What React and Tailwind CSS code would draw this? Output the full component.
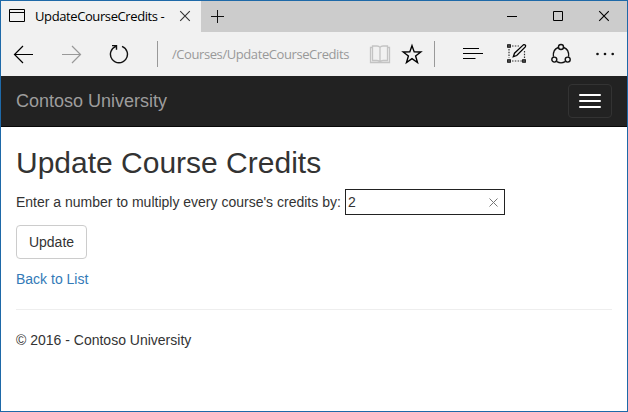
function TabBar() {
  return (
    <div className="flex h-[31px] bg-[#cccccc]">
      <div className="flex w-[200px] items-center bg-[#f1f1f1] pl-2">
        <svg className="h-[31px] w-4 shrink-0" viewBox="0 0 16 31" fill="none" stroke="#000">
          <path d="M.5 8.5h15v12H.5zM1 11.5h14" />
        </svg>
        <span className="mb-0.5 ml-2.5 w-[134px] whitespace-nowrap font-['Open_Sans',sans-serif] text-[13px] tracking-[-0.4px] text-black">
          UpdateCourseCredits -
        </span>
        <svg className="ml-2.5 h-[31px] w-3 shrink-0" viewBox="0 0 12 31" fill="none" stroke="#333" strokeWidth="1.1">
          <path d="m1.2 10.2 9.6 9.6m0-9.6-9.6 9.6" />
        </svg>
      </div>
      <svg className="ml-2.5 h-[31px] w-[13px]" viewBox="0 0 13 31" stroke="#111">
        <path d="M0 15.5h13M6.5 9v13" />
      </svg>
      <svg className="ml-auto mr-[18px] h-[31px] w-[102px]" viewBox="0 0 102 31" fill="none" stroke="#000">
        <path d="M0 15.5h10M46.5 10.5h9v9h-9z" />
        <path d="m92.2 10.2 9.6 9.6m0-9.6-9.6 9.6" strokeWidth="1.1" />
      </svg>
    </div>
  );
}

function Toolbar() {
  return (
    <div className="flex h-11 items-center bg-[#f1f1f1] pl-3">
      <svg className="h-6 w-5 shrink-0" viewBox="0 0 20 24" fill="none" stroke="#000" strokeWidth="1.2">
        <path d="M1.5 12.5H20M10 4l-8.5 8.5L10 21" />
      </svg>
      <svg className="ml-[29px] h-6 w-5 shrink-0" viewBox="0 0 20 24" fill="none" stroke="#999" strokeWidth="1.2">
        <path d="M0 12.5h18.5M10 4l8.5 8.5L10 21" />
      </svg>
      <svg className="ml-[27px] h-6 w-5 shrink-0" viewBox="0 0 20 24" fill="none" stroke="#111" strokeWidth="1.4">
        <path d="M13 4.3A8.500 8.500 0 1 1 6.900 4.300M3 3.600h4.500v4.200" />
      </svg>
      <div className="ml-7 h-[26px] w-px shrink-0 bg-[#999999]" />
      <span className="ml-3.5 w-[190px] shrink-0 whitespace-nowrap font-['Open_Sans',sans-serif] text-[13px] tracking-[-0.42px] text-[#999999]">
        /Courses/UpdateCourseCredits
      </span>
      <svg className="ml-[7px] h-6 w-[22px] shrink-0" viewBox="0 0 22 24" fill="none" stroke="#c3c3c3" strokeWidth="1.3">
        <path d="M11 5.300Q10 4 8 4H3.500v14.500H8q2 0 3 1.500 1-1.500 3-1.500h4.500V4H14q-2 0-3 1.300zM11 5.300v15M3.500 5.500h-2v15h19v-15h-2" />
      </svg>
      <svg className="ml-2.5 h-6 w-[22px] shrink-0" viewBox="0 0 22 24" fill="none" stroke="#000" strokeWidth="1.4">
        <path d="m11 3.700 2.200 6.200 6.600.1-5.200 4 1.900 6.500L11 16.600l-5.500 3.900L7.400 14l-5.200-4 6.600-.1z" />
      </svg>
      <div className="ml-[11px] h-[26px] w-px shrink-0 bg-[#999999]" />
      <svg className="ml-7 h-6 w-5 shrink-0" viewBox="0 0 20 24" fill="none" stroke="#000" strokeWidth="1">
        <path d="M0 6.500h16M0 11.500h20M0 16.500h12.500" />
      </svg>
      <svg className="ml-6 h-6 w-5 shrink-0" viewBox="0 0 20 24" fill="none" stroke="#000">
        <path d="M5 4h7M2 7v9M5 19h10M17.500 9v7" strokeWidth="1.2" strokeDasharray="1.500 1.300" stroke="#333" />
        <path d="M.8 2.800h2.400v2.400H.8zM.8 17.800h2.400v2.400H.8zM15.800 17.800h2.400v2.400h-2.400z" strokeWidth="1.300" />
        <path d="M6.300 14.700 7.500 11.200 16.300 2.900q1-.7 1.900.1t.1 1.900L9.700 13.500z" strokeWidth="1.300" />
      </svg>
      <svg className="ml-6 h-6 w-5 shrink-0" viewBox="0 0 20 24" fill="none" stroke="#111" strokeWidth="1.4">
        <path d="M7.200 5.500C3.900 6.600 1.900 10 2.400 14.800M12.800 5.500c3.300 1.100 5.300 4.500 4.800 9.300M5.800 19.700q4.200 2.400 8.400 0" />
        <circle cx="10" cy="5" r="2.500" />
        <circle cx="3.300" cy="17.600" r="2.500" />
        <circle cx="16.700" cy="17.600" r="2.500" />
      </svg>
      <svg className="ml-[25px] h-6 w-5 shrink-0" viewBox="0 0 20 24" fill="#111">
        <circle cx="1.500" cy="12" r="1.300" />
        <circle cx="9" cy="12" r="1.300" />
        <circle cx="16.700" cy="12" r="1.300" />
      </svg>
    </div>
  );
}

export default function App() {
  return (
    <div className="flex h-[412px] w-[628px] flex-col overflow-hidden border border-[#1e69a8] bg-white font-['Liberation_Sans',Arial,sans-serif] text-sm leading-5 text-[#333333]">
      <TabBar />
      <Toolbar />
      <nav className="flex h-[51px] items-center justify-between border-b border-[#080808] bg-[#222222] px-[15px]">
        <a className="text-lg leading-5 text-[#9d9d9d]">Contoso University</a>
        <button className="flex h-[34px] w-11 flex-col items-center justify-center gap-1 rounded border border-[#333333]">
          <span className="h-0.5 w-[22px] rounded-[1px] bg-white" />
          <span className="h-0.5 w-[22px] rounded-[1px] bg-white" />
          <span className="h-0.5 w-[22px] rounded-[1px] bg-white" />
        </button>
      </nav>
      <main className="px-[15px] pt-[19px]">
        <h2 className="text-[30px] leading-[33px]">Update Course Credits</h2>
        <div className="mt-2.5 flex items-center">
          <label className="w-[329px] whitespace-nowrap">Enter a number to multiply every course's credits by:</label>
          <div className="flex h-[26px] w-40 items-center justify-between border border-[#222222] pl-0.5 pr-1.5">
            <span>2</span>
            <svg className="h-[9px] w-[9px]" viewBox="0 0 9 9" stroke="#777">
              <path d="m.5.5 8 8m0-8-8 8" />
            </svg>
          </div>
        </div>
        <button className="mt-2.5 block h-[34px] w-[71px] rounded border border-[#cccccc] bg-white">Update</button>
        <a className="mt-2.5 block text-[#337ab7]">Back to List</a>
        <hr className="my-5 border-[#eeeeee]" />
        <p>© 2016 - Contoso University</p>
      </main>
    </div>
  );
}
